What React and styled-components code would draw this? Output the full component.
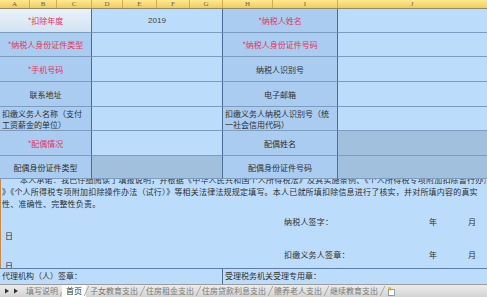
import React from "react";
import styled, { createGlobalStyle, css } from "styled-components";

const GlobalStyle = createGlobalStyle`
  html, body {
    margin: 0;
    padding: 0;
  }
  body {
    width: 487px;
    height: 297px;
    overflow: hidden;
    background: #bcdcfb;
    font-family: "Noto Sans CJK SC", "Liberation Sans", sans-serif;
  }
  * {
    box-sizing: border-box;
  }
`;

const Sheet = styled.div`
  width: 487px;
  height: 297px;
  display: flex;
  flex-direction: column;
  overflow: hidden;
  background: #bcdcfb;
`;

const ColHeader = styled.div`
  display: flex;
  flex-shrink: 0;
  height: 9px;
  background: linear-gradient(#fde893, #f1cd58);
  border-bottom: 1px solid #8e8a72;
`;

const ColLetter = styled.div`
  width: ${(p) => p.$w}px;
  flex-shrink: 0;
  font-family: "Liberation Serif", serif;
  font-size: 7px;
  line-height: 8px;
  text-align: center;
  color: #6b6040;
  border-right: 1px solid ${(p) => (p.$last ? "transparent" : "#d4ae4c")};
`;

const Form = styled.div`
  display: grid;
  flex-shrink: 0;
  grid-template-columns: 92px 131px 115px 1fr;
  grid-template-rows: 24px 24px 25px 25px 24px 25px 23px;
`;

const tones = {
  head: "linear-gradient(#e9f1f9, #d3e3f3)",
  label: "#a9ccf0",
  value: "#bcdcfb",
  dark: "#a1c0de",
};

const Cell = styled.div`
  display: flex;
  align-items: center;
  justify-content: ${(p) => (p.$left ? "flex-start" : "center")};
  padding: 0 2px;
  background: ${(p) => tones[p.$tone || "value"]};
  border-bottom: 1px solid #7c9cc0;
  border-right: ${(p) => (p.$end ? "none" : "1px solid #4c6e94")};
  font-size: 8px;
  line-height: 11px;
  white-space: nowrap;
  color: ${(p) => (p.$red ? "#e5335d" : "#2f2f2f")};
  ${(p) =>
    p.$left &&
    css`
      text-align: left;
    `}
`;

const Year = styled.span`
  font-family: "Liberation Sans", sans-serif;
  font-size: 8px;
  color: #444;
`;

const Statement = styled.div`
  height: 89px;
  flex-shrink: 0;
  overflow: hidden;
  border-left: 1px solid #d0883e;
  padding: 0 1px;
  color: #2f2f2f;
  font-size: 8px;
  letter-spacing: 0.2px;
`;

const Para = styled.div`
  margin-top: -5px;
  line-height: 12px;
`;

const Line = styled.div`
  white-space: nowrap;
  overflow: hidden;
  padding-left: ${(p) => p.$indent || 0}px;
`;

const SignRow = styled.div`
  display: grid;
  grid-template-columns: 282px 145px 39px 1fr;
  line-height: 12px;
  margin-top: ${(p) => p.$mt}px;
`;

const Day = styled.div`
  line-height: 12px;
  padding-left: 3px;
  margin-top: ${(p) => p.$mt}px;
`;

const Footer = styled.div`
  display: grid;
  grid-template-columns: 223px 1fr;
  height: 16px;
  flex-shrink: 0;
  border-top: 1px solid #5a7ea4;
  font-size: 8px;
  color: #2f2f2f;
`;

const FooterCell = styled.div`
  padding: 1px 2px 0;
  line-height: 12px;
  border-right: ${(p) => (p.$divider ? "1px solid #4c6e94" : "none")};
`;

const TabBar = styled.div`
  display: flex;
  align-items: center;
  height: 13px;
  flex-shrink: 0;
  padding-left: 4px;
  background: linear-gradient(#ececec, #d3d3d3);
  border-top: 1px solid #9c9c9c;
  font-size: 8px;
  color: #777;
`;

const Nav = styled.svg`
  width: 6px;
  height: 6px;
  margin-right: 3px;
`;

const Tab = styled.div`
  position: relative;
  height: 12px;
  line-height: 12px;
  padding: 0 4px;
  white-space: nowrap;
  background: ${(p) => (p.$active ? "#ffffff" : "transparent")};
  color: ${(p) => (p.$active ? "#333" : "#7a7a7a")};

  &::after {
    content: "";
    position: absolute;
    right: -1px;
    top: 1px;
    width: 1px;
    height: 10px;
    background: #a8a8a8;
    transform: skewX(-25deg);
  }
`;

const NewSheet = styled.svg`
  width: 9px;
  height: 9px;
  margin-left: 5px;
`;

const columns = [
  ["A", 30],
  ["B", 27],
  ["C", 35],
  ["D", 31],
  ["E", 34],
  ["F", 33],
  ["G", 33],
  ["H", 50],
  ["I", 65],
  ["J", 149],
];

const tabs = [
  "填写说明",
  "首页",
  "子女教育支出",
  "住房租金支出",
  "住房贷款利息支出",
  "赡养老人支出",
  "继续教育支出",
];

export default function App() {
  return (
    <Sheet>
      <GlobalStyle />
      <ColHeader>
        {columns.map(([name, w], i) => (
          <ColLetter key={name} $w={w} $last={i === columns.length - 1}>
            {name}
          </ColLetter>
        ))}
      </ColHeader>

      <Form>
        <Cell $tone="head" $red>*扣除年度</Cell>
        <Cell>
          <Year>2019</Year>
        </Cell>
        <Cell $tone="label" $red>*纳税人姓名</Cell>
        <Cell $end />

        <Cell $tone="label" $red>*纳税人身份证件类型</Cell>
        <Cell />
        <Cell $tone="label" $red>*纳税人身份证件号码</Cell>
        <Cell $end />

        <Cell $tone="label" $red>*手机号码</Cell>
        <Cell />
        <Cell $tone="label">纳税人识别号</Cell>
        <Cell $end />

        <Cell $tone="label">联系地址</Cell>
        <Cell />
        <Cell $tone="label">电子邮箱</Cell>
        <Cell $end />

        <Cell $tone="label" $left>
          扣缴义务人名称（支付
          <br />
          工资薪金的单位）
        </Cell>
        <Cell />
        <Cell $tone="label" $left>
          扣缴义务人纳税人识别号（统
          <br />
          一社会信用代码）
        </Cell>
        <Cell $end />

        <Cell $tone="label" $red>*配偶情况</Cell>
        <Cell />
        <Cell $tone="label">配偶姓名</Cell>
        <Cell $tone="dark" $end />

        <Cell $tone="label">配偶身份证件类型</Cell>
        <Cell $tone="dark" />
        <Cell $tone="label">配偶身份证件号码</Cell>
        <Cell $tone="dark" $end />
      </Form>

      <Statement>
        <Para>
          <Line $indent={18}>
            本人承诺：我已仔细阅读了填报说明，并根据《中华人民共和国个人所得税法》及其实施条例、《个人所得税专项附加扣除暂行办法
          </Line>
          <Line>
            》《个人所得税专项附加扣除操作办法（试行）》等相关法律法规规定填写。本人已就所填扣除信息进行了核实，并对所填内容的真实
          </Line>
          <Line>性、准确性、完整性负责。</Line>
        </Para>
        <SignRow $mt={6}>
          <span />
          <span>纳税人签字：</span>
          <span>年</span>
          <span>月</span>
        </SignRow>
        <Day $mt={2}>日</Day>
        <SignRow $mt={7}>
          <span />
          <span>扣缴义务人签章：</span>
          <span>年</span>
          <span>月</span>
        </SignRow>
        <Day $mt={-1}>日</Day>
      </Statement>

      <Footer>
        <FooterCell $divider>代理机构（人）签章：</FooterCell>
        <FooterCell>受理税务机关受理专用章：</FooterCell>
      </Footer>

      <TabBar>
        <Nav viewBox="0 0 6 6">
          <path d="M1 0.5 L5 3 L1 5.5 Z" fill="#333" />
        </Nav>
        <Nav viewBox="0 0 6 6">
          <path d="M1 0.5 L5 3 L1 5.5 Z" fill="#333" />
        </Nav>
        {tabs.map((t) => (
          <Tab key={t} $active={t === "首页"}>
            {t}
          </Tab>
        ))}
        <NewSheet viewBox="0 0 9 9">
          <rect x="1.5" y="2.5" width="6" height="6" fill="#fff" stroke="#7a8aa0" strokeWidth="0.8" />
          <path d="M1 1 L3.5 1 L3.5 3.5" fill="none" stroke="#e8a020" strokeWidth="1.2" />
        </NewSheet>
      </TabBar>
    </Sheet>
  );
}
